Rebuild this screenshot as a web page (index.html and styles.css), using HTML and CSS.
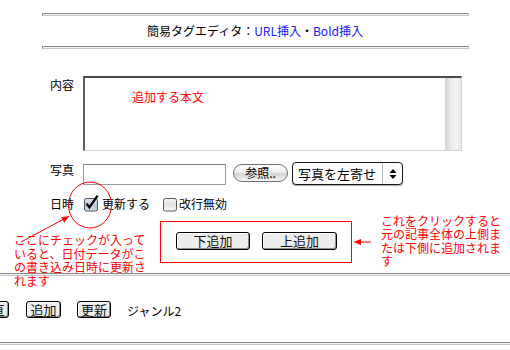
FILE: index.html
```html
<!DOCTYPE html>
<html lang="ja">
<head>
<meta charset="utf-8">
<title>簡易タグエディタ</title>
<link rel="stylesheet" href="styles.css">
</head>
<body>
<div class="page">
  <div class="rule rule-short"></div>
  <div class="title">簡易タグエディタ：<a class="link">URL挿入</a>・<a class="link">Bold挿入</a></div>
  <div class="rule rule-short"></div>

  <form class="form">
    <div class="row row-content">
      <span class="label">内容</span>
      <div class="textarea">
        <div class="textarea-body"><span class="red">追加する本文</span></div>
        <div class="scrollbar"></div>
      </div>
    </div>

    <div class="row row-photo">
      <span class="label">写真</span>
      <div class="file-field"></div>
      <span class="aqua-btn">参照..</span>
      <div class="select">
        <span class="select-text">写真を左寄せ</span>
        <span class="select-arrows">
          <svg width="8" height="12" viewBox="0 0 8 12"><path d="M4 1 L7.5 5 L0.5 5 Z M0.5 7 L7.5 7 L4 11 Z" fill="#000"/></svg>
        </span>
      </div>
    </div>

    <div class="row row-date">
      <span class="label">日時</span>
      <label class="check">
        <svg class="cb" width="16" height="16" viewBox="0 0 16 16">
          <defs>
            <linearGradient id="cbOn" x1="0" y1="0" x2="0" y2="1">
              <stop offset="0" stop-color="#e4e9f0"/>
              <stop offset="0.5" stop-color="#b8c3d2"/>
              <stop offset="1" stop-color="#d8dfe8"/>
            </linearGradient>
          </defs>
          <rect x="1.5" y="2.5" width="13" height="12.5" rx="2" fill="url(#cbOn)" stroke="#4b5563"/>
          <path d="M3.6 7.6 L6.4 11.4 L14.6 -0.4" fill="none" stroke="#000" stroke-width="2.2" stroke-linejoin="miter"/>
        </svg>
        <span class="check-text">更新する</span>
      </label>
      <label class="check check-2">
        <svg class="cb" width="16" height="16" viewBox="0 0 16 16">
          <defs>
            <linearGradient id="cbOff" x1="0" y1="0" x2="0" y2="1">
              <stop offset="0" stop-color="#f4f4f4"/>
              <stop offset="0.5" stop-color="#e2e2e2"/>
              <stop offset="1" stop-color="#fafafa"/>
            </linearGradient>
          </defs>
          <rect x="1.5" y="2.5" width="13" height="12.5" rx="2" fill="url(#cbOff)" stroke="#5a5a5a"/>
        </svg>
        <span class="check-text">改行無効</span>
      </label>
    </div>

    <div class="row row-buttons">
      <div class="button-box">
        <span class="btn btn-w74">下追加</span>
        <span class="btn btn-w75">上追加</span>
      </div>
    </div>
  </form>

  <div class="rule rule-full"></div>

  <div class="bottom-row">
    <span class="btn btn-cut">一覧直</span>
    <span class="btn btn-w35">追加</span>
    <span class="btn btn-w34">更新</span>
    <span class="genre">ジャンル2</span>
  </div>

  <div class="rule rule-full rule-bottom"></div>
</div>

<svg class="overlay" width="510" height="350" viewBox="0 0 510 350">
  <ellipse cx="90" cy="205" rx="21.5" ry="23" fill="none" stroke="#f00" stroke-width="1"/>
  <line x1="21" y1="242" x2="64" y2="219" stroke="#f00" stroke-width="1"/>
  <path d="M69.5 216 L61.2 217.3 L64.2 222.6 Z" fill="#f00"/>
  <line x1="371" y1="242" x2="360" y2="242" stroke="#f00" stroke-width="1"/>
  <path d="M353.5 242 L361 239 L361 245 Z" fill="#f00"/>
</svg>

<div class="note note-left">ここにチェックが入って<br>いると、日付データがこ<br>の書き込み日時に更新さ<br>れます</div>
<div class="note note-right">これをクリックすると<br>元の記事全体の上側ま<br>たは下側に追加されま<br>す</div>
</body>
</html>
```

FILE: styles.css
```css
* { box-sizing: border-box; }

html, body {
  margin: 0;
  padding: 0;
}

body {
  position: relative;
  width: 510px;
  height: 350px;
  overflow: hidden;
  background: #fff;
  color: #000;
  font-family: "Noto Sans CJK JP", "Noto Sans", sans-serif;
  font-size: 12px;
  line-height: 16px;
}

.page {
  padding-top: 13px;
}

.rule {
  height: 3px;
  border-top: 1px solid #8a8a8a;
  border-bottom: 1px solid #c8c8c8;
  background: #f2f2f2;
}

.rule-short {
  margin: 0 41px 0 42px;
  border-left: 1px solid #8a8a8a;
  border-right: 1px solid #c8c8c8;
}

.title {
  height: 30px;
  line-height: 30px;
  text-align: center;
  color: #000;
}

.link {
  color: #1515ff;
  text-decoration: none;
}

.form {
  padding: 27px 0 0 50px;
}

.row {
  display: flex;
}

.label {
  flex: none;
  width: 33px;
  line-height: 16px;
}

.row-content .label {
  padding-top: 1px;
}

.textarea {
  display: flex;
  width: 379px;
  height: 75px;
  border-top: 2px solid #4a4a4a;
  border-left: 2px solid #5c5c5c;
  border-right: 1px solid #d6d6d6;
  border-bottom: 1px solid #d6d6d6;
}

.textarea-body {
  flex: 1;
  padding: 11px 0 0 47px;
}

.red {
  color: #f00;
}

.scrollbar {
  width: 16px;
  background: linear-gradient(90deg, #cfcfcf 0, #e9e9e9 35%, #f6f6f6 70%, #e6e6e6 100%);
}

.row-photo {
  margin-top: 11px;
  height: 23px;
}

.file-field {
  width: 143px;
  height: 21px;
  margin-top: 2px;
  border: 1px solid #9c9c9c;
  border-top-color: #7c7c7c;
}

.aqua-btn {
  width: 55px;
  height: 18px;
  margin: 2px 0 0 7px;
  border: 1px solid #707070;
  border-radius: 9px;
  background: linear-gradient(#ffffff 0, #f0f0f0 45%, #d4d4d4 55%, #e8e8e8 85%, #f8f8f8 100%);
  text-align: center;
  line-height: 16px;
  font-size: 12px;
}

.select {
  display: flex;
  width: 111px;
  height: 23px;
  margin-left: 4px;
  border: 1px solid #1a1a1a;
  border-radius: 4px;
  background: #fff;
  box-shadow: 0 1px 1px rgba(0, 0, 0, 0.35);
}

.select-text {
  flex: 1;
  padding-left: 5px;
  font-size: 13px;
  line-height: 21px;
  white-space: nowrap;
}

.select-arrows {
  display: flex;
  align-items: center;
  justify-content: center;
  width: 20px;
  border-left: 1px solid #b8b8b8;
}

.row-date {
  margin-top: 11px;
  height: 16px;
  align-items: center;
}

.check {
  display: inline-flex;
  align-items: center;
}

.cb {
  flex: none;
  overflow: visible;
}

.check-text {
  margin-left: 3px;
}

.check-2 {
  margin-left: 12px;
}

.check-2 .check-text {
  margin-left: 1px;
}

.row-buttons {
  margin-top: 9px;
}

.button-box {
  display: flex;
  gap: 12px;
  width: 192px;
  height: 42px;
  margin-left: 110px;
  padding: 10px 0 0 15px;
  border: 1px solid #f00;
}

.btn {
  display: inline-block;
  flex: none;
  height: 18px;
  border: 1px solid #000;
  border-radius: 3px;
  background: #ededed;
  box-shadow: inset -1px -1px 0 #8c8c8c, inset 1px 1px 0 #ffffff;
  text-align: center;
  font-size: 13px;
  line-height: 16px;
  color: #111;
  white-space: nowrap;
}

.btn-w74 { width: 74px; }
.btn-w75 { width: 75px; }
.btn-w35 { width: 35px; }
.btn-w34 { width: 34px; }

.btn-cut {
  width: 48px;
  margin-left: -39px;
  margin-right: 1px;
  height: 17px;
}

.rule-full {
  margin-top: 10px;
}

.bottom-row {
  display: flex;
  align-items: center;
  gap: 16px;
  padding-top: 25px;
  height: 42px;
}

.bottom-row .btn {
  height: 17px;
  line-height: 15px;
}

.genre {
  line-height: 16px;
  padding-top: 3px;
}

.rule-bottom {
  margin-top: 24px;
}

.overlay {
  position: absolute;
  left: 0;
  top: 0;
  pointer-events: none;
}

.note {
  position: absolute;
  color: #f00;
  font-size: 12px;
  white-space: nowrap;
}

.note-left {
  left: 14px;
  top: 233px;
  line-height: 13.6px;
}

.note-right {
  left: 381px;
  top: 214px;
  line-height: 13.3px;
}
```
